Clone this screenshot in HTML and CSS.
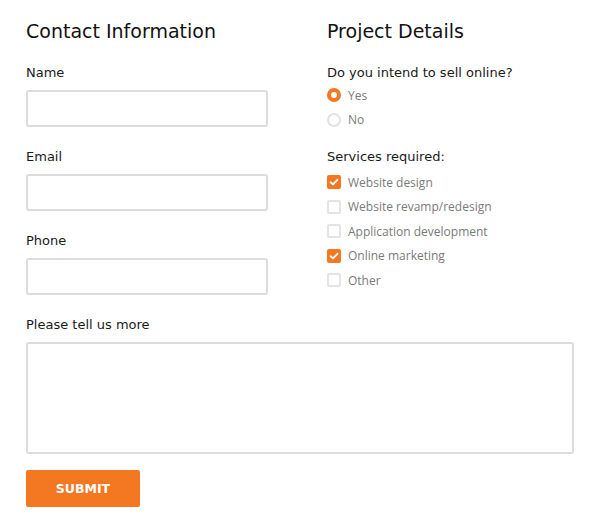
FILE: index.html
```html
<!DOCTYPE html>
<html>
<head>
<meta charset="utf-8">
<link rel="stylesheet" href="styles.css">
</head>
<body>
<form class="form">
  <div class="cols">
    <section class="col">
      <h2 class="heading">Contact Information</h2>
      <div class="field">
        <label class="label">Name</label>
        <div class="input"></div>
      </div>
      <div class="field">
        <label class="label">Email</label>
        <div class="input"></div>
      </div>
      <div class="field">
        <label class="label">Phone</label>
        <div class="input"></div>
      </div>
    </section>
    <section class="col">
      <h2 class="heading">Project Details</h2>
      <div class="group">
        <div class="label">Do you intend to sell online?</div>
        <div class="option"><span class="radio on"></span><span class="opt-text">Yes</span></div>
        <div class="option"><span class="radio"></span><span class="opt-text">No</span></div>
      </div>
      <div class="group group-services">
        <div class="label">Services required:</div>
        <div class="option"><span class="check on"><svg viewBox="0 0 14 14" width="14" height="14"><path d="M3.6 7.2 L6 9.4 L10.4 4.8" fill="none" stroke="#fff" stroke-width="1.9" stroke-linecap="round" stroke-linejoin="round"/></svg></span><span class="opt-text">Website design</span></div>
        <div class="option"><span class="check"></span><span class="opt-text">Website revamp/redesign</span></div>
        <div class="option"><span class="check"></span><span class="opt-text">Application development</span></div>
        <div class="option"><span class="check on"><svg viewBox="0 0 14 14" width="14" height="14"><path d="M3.6 7.2 L6 9.4 L10.4 4.8" fill="none" stroke="#fff" stroke-width="1.9" stroke-linecap="round" stroke-linejoin="round"/></svg></span><span class="opt-text">Online marketing</span></div>
        <div class="option"><span class="check"></span><span class="opt-text">Other</span></div>
      </div>
    </section>
  </div>
  <div class="field field-more">
    <label class="label">Please tell us more</label>
    <div class="textarea"></div>
  </div>
  <button type="button" class="submit">SUBMIT</button>
</form>
</body>
</html>
```
FILE: styles.css
```css
html, body {
  margin: 0;
  padding: 0;
  background: #fff;
}
.form {
  padding: 19px 26px 0 26px;
  font-family: "DejaVu Sans", sans-serif;
  color: #1a1a1a;
}
.cols {
  display: grid;
  grid-template-columns: 242px 1fr;
  column-gap: 59px;
}
.heading {
  margin: 0 0 22px 0;
  font-size: 19px;
  line-height: 24px;
  font-weight: normal;
  color: #111;
}
.label {
  display: block;
  font-size: 13px;
  line-height: 16px;
  color: #1a1a1a;
}
.field .label {
  margin-bottom: 9px;
}
.input {
  height: 33px;
  border: 2px solid #dcdcdc;
  border-radius: 3px;
  margin-bottom: 22px;
}
.group .label {
  margin-bottom: 2px;
}
.group-services {
  margin-top: 17px;
}
.group-services .label {
  margin-bottom: 5px;
}
.option {
  display: flex;
  align-items: center;
  height: 24.5px;
}
.opt-text {
  font-family: "Open Sans", sans-serif;
  font-size: 12px;
  color: #7a7a7a;
  margin-left: 7px;
}
.radio {
  width: 10px;
  height: 10px;
  border: 2px solid #e2e2e2;
  border-radius: 50%;
  background: #fff;
}
.radio.on {
  width: 6px;
  height: 6px;
  border: 4px solid #f47721;
}
.check {
  width: 14px;
  height: 14px;
  box-sizing: border-box;
  border: 2px solid #e4e4e4;
  border-radius: 2px;
  display: flex;
}
.check.on {
  border: none;
  background: #f47721;
}
.field-more {
  margin-top: 0;
}
.textarea {
  height: 108px;
  border: 2px solid #dcdcdc;
  border-radius: 3px;
  margin-bottom: 16px;
}
.submit {
  display: block;
  width: 114px;
  height: 37px;
  border: none;
  border-radius: 2px;
  background: #f47721;
  color: #fff;
  font-family: "DejaVu Sans", sans-serif;
  font-weight: bold;
  font-size: 12.5px;
  padding: 0;
}
```
